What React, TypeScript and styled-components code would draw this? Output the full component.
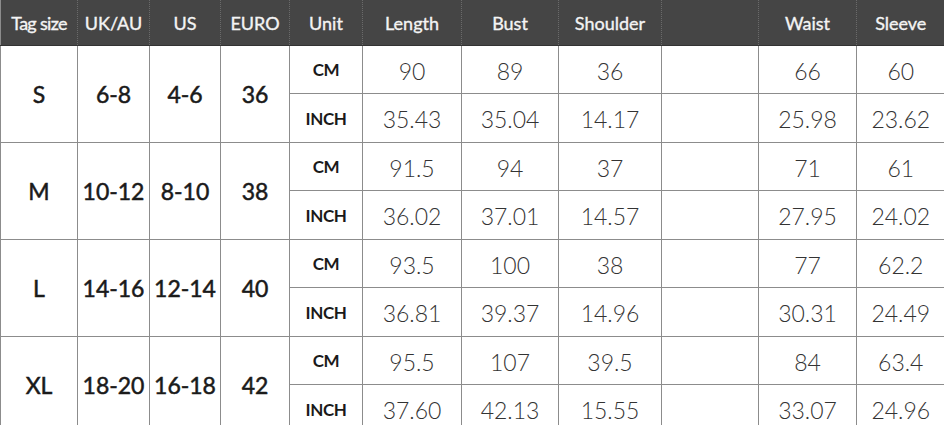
import styled, { createGlobalStyle } from 'styled-components';

const GlobalStyle = createGlobalStyle`
   html, body {
      margin: 0;
      padding: 0;
      background: #ffffff;
   }
`;

type Row = {
   tag: string;
   uk: string;
   us: string;
   euro: string;
   cm: string[];
   inch: string[];
};

const columns = [
   { label: 'Tag size', width: 77, tight: true },
   { label: 'UK/AU', width: 72 },
   { label: 'US', width: 71 },
   { label: 'EURO', width: 69 },
   { label: 'Unit', width: 73 },
   { label: 'Length', width: 99 },
   { label: 'Bust', width: 97 },
   { label: 'Shoulder', width: 103 },
   { label: '', width: 97 },
   { label: 'Waist', width: 98 },
   { label: 'Sleeve', width: 88 },
];

const rows: Row[] = [
   { tag: 'S', uk: '6-8', us: '4-6', euro: '36', cm: ['90', '89', '36', '', '66', '60'], inch: ['35.43', '35.04', '14.17', '', '25.98', '23.62'] },
   { tag: 'M', uk: '10-12', us: '8-10', euro: '38', cm: ['91.5', '94', '37', '', '71', '61'], inch: ['36.02', '37.01', '14.57', '', '27.95', '24.02'] },
   { tag: 'L', uk: '14-16', us: '12-14', euro: '40', cm: ['93.5', '100', '38', '', '77', '62.2'], inch: ['36.81', '39.37', '14.96', '', '30.31', '24.49'] },
   { tag: 'XL', uk: '18-20', us: '16-18', euro: '42', cm: ['95.5', '107', '39.5', '', '84', '63.4'], inch: ['37.60', '42.13', '15.55', '', '33.07', '24.96'] },
];

const Chart = styled.table`
   width: 944px;
   table-layout: fixed;
   border-collapse: collapse;
   font-family: Lato, 'Open Sans', sans-serif;
   color: #2e2e2e;
   border-left: 1px solid #8c8c8c;
`;

const HeadCell = styled.th<{ $tight?: boolean }>`
   height: 45px;
   padding: 0;
   background: #454545;
   color: #f4f4f4;
   font-size: 18px;
   font-weight: 400;
   -webkit-text-stroke: 0.35px #f4f4f4;
   letter-spacing: ${(p) => (p.$tight ? '-0.7px' : '0px')};
   text-align: center;
   vertical-align: middle;
   border-left: 1px dotted #6a6a6a;
   border-bottom: 1px solid #333;
   white-space: nowrap;
   &:first-child {
      border-left: none;
   }
`;

const Cell = styled.td`
   padding: 0;
   text-align: center;
   vertical-align: middle;
   border: 1px solid #8c8c8c;
   &:last-child {
      border-right: none;
   }
`;

const SizeCell = styled(Cell)`
   font-size: 23px;
   font-weight: 400;
   color: #1a1a1a;
   -webkit-text-stroke: 0.5px #1a1a1a;
   white-space: nowrap;
`;

const UnitCell = styled(Cell)`
   font-size: 17px;
   font-weight: 700;
   color: #1a1a1a;
   letter-spacing: -0.4px;
`;

const ValueCell = styled(Cell)`
   font-size: 23px;
   font-weight: 300;
   color: #333;
   padding-top: 2px;
`;

const SubRow = styled.tr<{ $h: number }>`
   height: ${(p) => p.$h}px;
`;

export default function App() {
   return (
      <>
         <GlobalStyle />
         <Chart>
            <colgroup>
               {columns.map((c, i) => (
                  <col key={i} style={{ width: c.width }} />
               ))}
            </colgroup>
            <thead>
               <tr>
                  {columns.map((c, i) => (
                     <HeadCell key={i} $tight={c.tight}>
                        {c.label}
                     </HeadCell>
                  ))}
               </tr>
            </thead>
            <tbody>
               {rows.map((r) => [
                  <SubRow $h={48} key={r.tag + '-cm'}>
                     <SizeCell rowSpan={2}>{r.tag}</SizeCell>
                     <SizeCell rowSpan={2}>{r.uk}</SizeCell>
                     <SizeCell rowSpan={2}>{r.us}</SizeCell>
                     <SizeCell rowSpan={2}>{r.euro}</SizeCell>
                     <UnitCell>CM</UnitCell>
                     {r.cm.map((v, i) => (
                        <ValueCell key={i}>{v}</ValueCell>
                     ))}
                  </SubRow>,
                  <SubRow $h={49} key={r.tag + '-inch'}>
                     <UnitCell>INCH</UnitCell>
                     {r.inch.map((v, i) => (
                        <ValueCell key={i}>{v}</ValueCell>
                     ))}
                  </SubRow>,
               ])}
            </tbody>
         </Chart>
      </>
   );
}
